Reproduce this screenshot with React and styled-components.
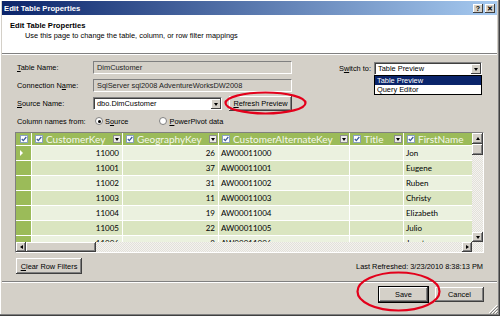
import React from 'react';
import styled, { createGlobalStyle } from 'styled-components';

const GlobalStyle = createGlobalStyle`
  html, body { margin: 0; padding: 0; background: #d4d0c8; }
  body { font-family: "Liberation Sans", Arial, sans-serif; }
  * { box-sizing: border-box; }
`;

// last column runs past the visible area and is clipped, as in the grid
const columns = [
  { key: 'CustomerKey', width: 91, align: 'right' },
  { key: 'GeographyKey', width: 96, align: 'right' },
  { key: 'CustomerAlternateKey', width: 131, align: 'left' },
  { key: 'Title', width: 54, align: 'left' },
  { key: 'FirstName', width: 92, align: 'left' },
];

const rows = [
  [11000, 26, 'AW00011000', '', 'Jon'],
  [11001, 37, 'AW00011001', '', 'Eugene'],
  [11002, 31, 'AW00011002', '', 'Ruben'],
  [11003, 11, 'AW00011003', '', 'Christy'],
  [11004, 19, 'AW00011004', '', 'Elizabeth'],
  [11005, 22, 'AW00011005', '', 'Julio'],
  [11006, 8, 'AW00011006', '', 'Janet'],
];

const gridColumns = `16px ${columns.map((c) => c.width + 'px').join(' ')}`;

export default function App() {
  return (
    <>
      <GlobalStyle />
      <Window>
        <TitleBar>
          <TitleText>Edit Table Properties</TitleText>
          <TitleButtons>
            <TitleButton>?</TitleButton>
            <TitleButton>✕</TitleButton>
          </TitleButtons>
        </TitleBar>
        <Header>
          <HeaderTitle>Edit Table Properties</HeaderTitle>
          <HeaderSub>Use this page to change the table, column, or row filter mappings</HeaderSub>
        </Header>
        <Separator />
        <Body>
          <FormArea>
            <Form>
              <FormRow $height={13}>
                <Label>
                  <u>T</u>able Name:
                </Label>
                <ReadField>DimCustomer</ReadField>
              </FormRow>
              <FormRow $height={13} $top={5}>
                <Label>
                  Connection N<u>a</u>me:
                </Label>
                <ReadField>SqlServer sql2008 AdventureWorksDW2008</ReadField>
              </FormRow>
              <FormRow $height={17} $top={3}>
                <Label>
                  <u>S</u>ource Name:
                </Label>
                <Combo $width={129}>
                  <ComboText>dbo.DimCustomer</ComboText>
                  <DropButton>
                    <ArrowDown />
                  </DropButton>
                </Combo>
                <Marked>
                  <Button $width={65} $height={17}>
                    <u>R</u>efresh Preview
                  </Button>
                  <Ellipse $left={-4} $top={-4} $w={83} $h={24} />
                </Marked>
              </FormRow>
              <FormRow $height={12} $top={3}>
                <Label>Column names from:</Label>
                <Radio $checked />
                <RadioLabel>
                  S<u>o</u>urce
                </RadioLabel>
                <Radio />
                <RadioLabel>
                  <u>P</u>owerPivot data
                </RadioLabel>
              </FormRow>
            </Form>
            <SwitchArea>
              <SwitchLabel>
                S<u>w</u>itch to:
              </SwitchLabel>
              <ComboHolder>
                <Combo $width={108}>
                  <ComboText>Table Preview</ComboText>
                  <DropButton>
                    <ArrowDown />
                  </DropButton>
                </Combo>
                <DropList>
                  <DropItem $selected>Table Preview</DropItem>
                  <DropItem>Query Editor</DropItem>
                </DropList>
              </ComboHolder>
            </SwitchArea>
          </FormArea>

          <GridBox>
            <DataArea>
              <GridRow $cols={gridColumns} $header>
                <SelectorCell $header>
                  <Check />
                </SelectorCell>
                {columns.map((c) => (
                  <HeaderCell key={c.key}>
                    <Check />
                    <HeaderName>{c.key}</HeaderName>
                    <FilterButton>
                      <ArrowDown />
                    </FilterButton>
                  </HeaderCell>
                ))}
              </GridRow>
              {rows.map((r, i) => (
                <GridRow key={r[0]} $cols={gridColumns} $odd={i % 2 === 1}>
                  <SelectorCell>{i === 0 && <CurrentMark />}</SelectorCell>
                  {r.map((v, j) => (
                    <Cell key={j} $align={columns[j].align}>
                      {v}
                    </Cell>
                  ))}
                </GridRow>
              ))}
            </DataArea>
            <VScroll>
              <ScrollButton $h={11}>
                <ArrowUp />
              </ScrollButton>
              <ScrollButton $h={11} />
              <Track />
              <ScrollButton $h={10}>
                <ArrowDown />
              </ScrollButton>
            </VScroll>
            <HScroll>
              <ScrollButton $w={10}>
                <ArrowLeft />
              </ScrollButton>
              <ScrollButton $w={70} />
              <Track />
              <ScrollButton $w={10}>
                <ArrowRight />
              </ScrollButton>
            </HScroll>
            <Track />
          </GridBox>

          <BottomRow>
            <Button $width={68} $height={18}>
              <u>C</u>lear Row Filters
            </Button>
            <Refreshed>Last Refreshed: 3/23/2010 8:38:13 PM</Refreshed>
          </BottomRow>
        </Body>
        <Separator $top={6} />
        <Footer>
          <Marked>
            <Button $width={51} $height={17} $default>
              Save
            </Button>
            <Ellipse $left={-22} $top={-15} $w={85} $h={41} />
          </Marked>
          <Button $width={51} $height={17}>
            Cancel
          </Button>
        </Footer>
        <Grip viewBox="0 0 10 10">
          <path d="M9 1 L1 9 M9 4 L4 9 M9 7 L7 9" stroke="#fff" strokeWidth="1" />
          <path d="M10 2 L2 10 M10 5 L5 10 M10 8 L8 10" stroke="#808080" strokeWidth="1" />
        </Grip>
      </Window>
    </>
  );
}

function Ellipse({ $left, $top, $w, $h }) {
  return (
    <EllipseSvg style={{ left: $left, top: $top }} width={$w} height={$h} viewBox={`0 0 ${$w} ${$h}`}>
      <ellipse cx={$w / 2} cy={$h / 2} rx={$w / 2 - 1.5} ry={$h / 2 - 1.5} fill="none" stroke="#e3001b" strokeWidth="2.2" />
    </EllipseSvg>
  );
}

function Check() {
  return (
    <CheckBox>
      <svg width="6" height="6" viewBox="0 0 6 6">
        <path d="M0.8 3 L2.3 4.6 L5.3 1" fill="none" stroke="#3a5a9a" strokeWidth="1.3" />
      </svg>
    </CheckBox>
  );
}

const Window = styled.div`
  position: relative;
  width: 500px;
  height: 316px;
  padding: 1px 3px 0 2px;
  background: #d4d0c8;
  box-shadow: inset -1px -1px #404040, inset -2px -2px #808080, inset 1px 1px #fff;
  font-size: 7.4px;
  color: #000;
  overflow: hidden;
`;

const TitleBar = styled.div`
  height: 14px;
  display: flex;
  align-items: center;
  justify-content: space-between;
  padding-left: 2px;
  background: linear-gradient(to right, #0a246a, #a6caf0);
`;

const TitleText = styled.span`
  color: #fff;
  font-weight: bold;
  font-size: 7.7px;
`;

const TitleButtons = styled.div`
  display: flex;
  gap: 2px;
  margin-right: 2px;
`;

const TitleButton = styled.div`
  width: 10px;
  height: 9px;
  display: flex;
  align-items: center;
  justify-content: center;
  background: #d4d0c8;
  box-shadow: inset -1px -1px #404040, inset 1px 1px #fff;
  font-size: 7px;
  font-weight: bold;
  line-height: 1;
`;

const Header = styled.div`
  height: 38px;
  background: #fff;
  padding: 6px 8px 0;
`;

const HeaderTitle = styled.div`
  font-weight: bold;
  font-size: 7.6px;
  line-height: 10px;
`;

const HeaderSub = styled.div`
  padding-left: 15px;
  line-height: 10px;
`;

const Separator = styled.div`
  margin-top: ${(p) => p.$top || 0}px;
  height: 2px;
  border-top: 1px solid #808080;
  border-bottom: 1px solid #fff;
`;

const Body = styled.div`
  padding: 0 13px;
`;

const FormArea = styled.div`
  display: flex;
  justify-content: space-between;
  align-items: flex-start;
  margin-top: 6px;
`;

const Form = styled.div`
  display: flex;
  flex-direction: column;
`;

const FormRow = styled.div`
  display: flex;
  align-items: center;
  height: ${(p) => p.$height}px;
  margin-top: ${(p) => p.$top || 0}px;
`;

const Label = styled.span`
  width: 78px;
  padding-left: 2px;
  white-space: nowrap;
`;

const ReadField = styled.div`
  width: 199px;
  height: 13px;
  padding-left: 3px;
  display: flex;
  align-items: center;
  background: #d4d0c8;
  border: 1px solid;
  border-color: #808080 #fff #fff #808080;
  color: #222;
`;

const Combo = styled.div`
  width: ${(p) => p.$width}px;
  height: 13px;
  display: flex;
  align-items: stretch;
  background: #fff;
  border: 1px solid;
  border-color: #808080 #fff #fff #808080;
  box-shadow: inset 1px 1px #404040;
`;

const ComboText = styled.span`
  flex: 1;
  padding-left: 3px;
  display: flex;
  align-items: center;
  white-space: nowrap;
`;

const DropButton = styled.div`
  width: 10px;
  display: flex;
  align-items: center;
  justify-content: center;
  background: #d4d0c8;
  box-shadow: inset -1px -1px #404040, inset 1px 1px #fff;
  margin: 1px 0 0;
`;

const ArrowDown = styled.span`
  width: 0;
  height: 0;
  border-left: 2.5px solid transparent;
  border-right: 2.5px solid transparent;
  border-top: 3px solid #000;
`;

const ArrowUp = styled.span`
  width: 0;
  height: 0;
  border-left: 2.5px solid transparent;
  border-right: 2.5px solid transparent;
  border-bottom: 3px solid #000;
`;

const ArrowLeft = styled.span`
  width: 0;
  height: 0;
  border-top: 2.5px solid transparent;
  border-bottom: 2.5px solid transparent;
  border-right: 3px solid #000;
`;

const ArrowRight = styled.span`
  width: 0;
  height: 0;
  border-top: 2.5px solid transparent;
  border-bottom: 2.5px solid transparent;
  border-left: 3px solid #000;
`;

const Marked = styled.div`
  position: relative;
  margin-left: 6px;
`;

const EllipseSvg = styled.svg`
  position: absolute;
  pointer-events: none;
`;

const Button = styled.div`
  width: ${(p) => p.$width}px;
  height: ${(p) => p.$height}px;
  display: flex;
  align-items: center;
  justify-content: center;
  background: #d4d0c8;
  white-space: nowrap;
  border: 1px solid ${(p) => (p.$default ? '#000' : 'transparent')};
  box-shadow: inset -1px -1px #404040, inset 1px 1px #fff, inset -2px -2px #808080;
`;

const Radio = styled.span`
  width: 8px;
  height: 8px;
  margin: 0 2px 0 2px;
  border-radius: 50%;
  background: #fff;
  border: 1px solid #808080;
  display: flex;
  align-items: center;
  justify-content: center;
  &::after {
    content: '';
    width: 3px;
    height: 3px;
    border-radius: 50%;
    background: ${(p) => (p.$checked ? '#000' : 'transparent')};
  }
`;

const RadioLabel = styled.span`
  margin-right: 29px;
`;

const SwitchArea = styled.div`
  display: flex;
  align-items: center;
  margin-right: 2px;
  margin-top: 1px;
`;

const SwitchLabel = styled.span`
  margin-right: 3px;
`;

const ComboHolder = styled.div`
  position: relative;
`;

const DropList = styled.div`
  position: absolute;
  top: 13px;
  left: 0;
  width: 108px;
  background: #fff;
  border: 1px solid #000;
  z-index: 2;
`;

const DropItem = styled.div`
  height: 9px;
  line-height: 9px;
  padding-left: 2px;
  background: ${(p) => (p.$selected ? '#0a246a' : '#fff')};
  color: ${(p) => (p.$selected ? '#fff' : '#000')};
`;

const GridBox = styled.div`
  margin-top: 5px;
  width: 469px;
  height: 121px;
  display: grid;
  grid-template-columns: 456px 11px;
  grid-template-rows: 109px 10px;
  border: 1px solid;
  border-color: #808080 #fff #fff #808080;
  background: #fff;
  font-family: Lato, "Open Sans", sans-serif;
`;

const DataArea = styled.div`
  overflow: hidden;
  background: #d4d0c8;
`;

const GridRow = styled.div`
  display: grid;
  grid-template-columns: ${(p) => p.$cols};
  height: ${(p) => (p.$header ? 13 : 15)}px;
  background: ${(p) => (p.$header ? '#9bbb59' : p.$odd ? '#dae5c0' : '#ebf1df')};
  border-bottom: 1px solid #fff;
`;

const SelectorCell = styled.div`
  background: #9bbb59;
  border-right: 1px solid #fff;
  display: flex;
  align-items: center;
  justify-content: center;
`;

const CurrentMark = styled.span`
  width: 0;
  height: 0;
  margin-right: 5px;
  border-top: 3px solid transparent;
  border-bottom: 3px solid transparent;
  border-left: 3px solid #fff;
`;

const HeaderCell = styled.div`
  display: flex;
  align-items: center;
  padding: 0 1px 0 3px;
  border-right: 1px solid #fff;
  overflow: hidden;
  white-space: nowrap;
`;

const CheckBox = styled.span`
  flex: none;
  width: 8px;
  height: 8px;
  background: #fff;
  border: 1px solid #8aa0c0;
  display: flex;
  align-items: center;
  justify-content: center;
`;

const HeaderName = styled.span`
  flex: 1;
  padding-left: 3px;
  color: #f4f8ec;
  font-size: 10px;
  overflow: hidden;
`;

const FilterButton = styled.span`
  flex: none;
  width: 8px;
  height: 8px;
  background: #ecece8;
  border: 1px solid #8c8c8c;
  display: flex;
  align-items: center;
  justify-content: center;
`;

const Cell = styled.div`
  display: flex;
  align-items: center;
  justify-content: ${(p) => (p.$align === 'right' ? 'flex-end' : 'flex-start')};
  padding: ${(p) => (p.$align === 'right' ? '0 3px 0 0' : '0 0 0 2px')};
  border-right: 1px solid #fff;
  font-size: 8px;
  color: #000;
  white-space: nowrap;
  overflow: hidden;
`;

const VScroll = styled.div`
  display: flex;
  flex-direction: column;
`;

const HScroll = styled.div`
  display: flex;
`;

const Track = styled.div`
  flex: 1;
  background: repeating-conic-gradient(#f4f3ef 0 25%, #e2e0da 0 50%) 0 0 / 2px 2px;
`;

const ScrollButton = styled.div`
  flex: none;
  width: ${(p) => (p.$w ? p.$w + 'px' : 'auto')};
  height: ${(p) => (p.$h ? p.$h + 'px' : 'auto')};
  display: flex;
  align-items: center;
  justify-content: center;
  background: #d4d0c8;
  box-shadow: inset -1px -1px #404040, inset 1px 1px #fff, inset -2px -2px #808080;
`;

const BottomRow = styled.div`
  display: flex;
  justify-content: space-between;
  align-items: center;
  margin-top: 4px;
  padding-right: 1px;
`;

const Refreshed = styled.span`
  white-space: nowrap;
`;

const Footer = styled.div`
  display: flex;
  justify-content: flex-end;
  gap: 5px;
  padding: 3px 12px 0 0;
`;

const Grip = styled.svg`
  position: absolute;
  right: 2px;
  bottom: 2px;
  width: 10px;
  height: 10px;
`;
